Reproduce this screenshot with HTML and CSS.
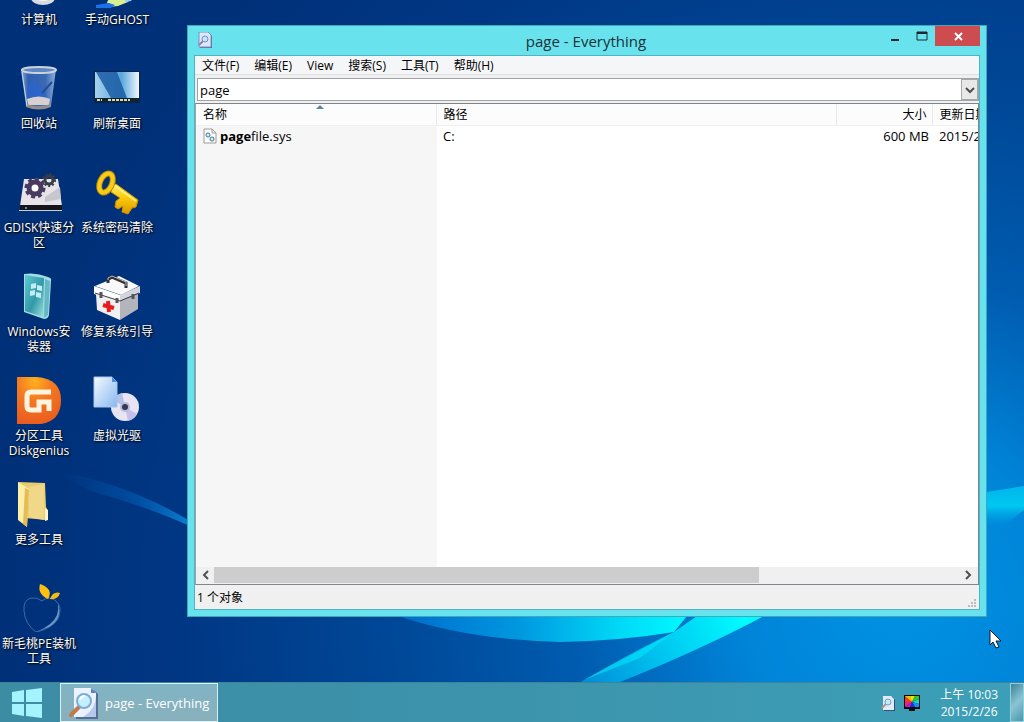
FILE: index.html
```
<!DOCTYPE html>
<html lang="zh-CN">
<head>
    <meta charset="UTF-8">
    <meta name="viewport" content="width=device-width, initial-scale=1.0">
    <title>page - Everything</title>
    <link rel="stylesheet" href="styles.css">
</head>
<body>
    <!-- Wallpaper -->
    <svg class="wallpaper" viewBox="0 0 1024 722" preserveAspectRatio="none" aria-hidden="true">
        <defs>
            <radialGradient id="sky" gradientUnits="userSpaceOnUse" cx="900" cy="600" r="900">
                <stop offset="0" stop-color="#0092e4"/>
                <stop offset=".18" stop-color="#0084d8"/>
                <stop offset=".36" stop-color="#005cb0"/>
                <stop offset=".56" stop-color="#004898"/>
                <stop offset=".8" stop-color="#003784"/>
                <stop offset="1" stop-color="#003078"/>
            </radialGradient>
            <linearGradient id="lens" x1="400" x2="700" y1="0" y2="0" gradientUnits="userSpaceOnUse">
                <stop offset="0" stop-color="#006ccc"/>
                <stop offset=".4" stop-color="#0098e0"/>
                <stop offset=".75" stop-color="#00dcf8"/>
                <stop offset="1" stop-color="#00ffff"/>
            </linearGradient>
            <linearGradient id="beam" x1="590" y1="682" x2="740" y2="610" gradientUnits="userSpaceOnUse">
                <stop offset="0" stop-color="#0090d8"/>
                <stop offset=".45" stop-color="#00c4f0"/>
                <stop offset="1" stop-color="#00fcff"/>
            </linearGradient>
            <linearGradient id="streak" x1="60" y1="0" x2="190" y2="0" gradientUnits="userSpaceOnUse">
                <stop offset="0" stop-color="#0050a8" stop-opacity="0"/>
                <stop offset=".6" stop-color="#0058b0" stop-opacity=".7"/>
                <stop offset="1" stop-color="#0c80d0"/>
            </linearGradient>
            <linearGradient id="ray" x1="0" y1="490" x2="0" y2="530" gradientUnits="userSpaceOnUse">
                <stop offset="0" stop-color="#00b8ec"/>
                <stop offset=".4" stop-color="#00c8f0"/>
                <stop offset="1" stop-color="#0088dc" stop-opacity="0"/>
            </linearGradient>
        </defs>
        <rect width="1024" height="722" fill="url(#sky)"/>
        <path d="M50 470q75 12 140 51v5q-50-22-100-35z" fill="url(#streak)"/>
        <path d="M398 616Q470 640 560 642Q620 641 674 632L700 600H398z" fill="url(#lens)"/>
        <path d="M720 600L674 632L584 680L520 722L620 682Q700 650 764 616z" fill="url(#beam)"/>
        <path d="M674 632Q640 648 584 680L640 658z" fill="#00e8fc" opacity=".6"/>
        <path d="M980 493L1024 486V510L980 545z" fill="url(#ray)"/>
    </svg>

    <main class="desktop">
        <nav class="shortcuts">
            <a href="#"><svg viewBox="0 0 48 48"><rect x="4" y="4" width="40" height="28" rx="2" fill="#9cc"/><ellipse cx="28" cy="38" rx="12" ry="7" fill="#d8dce0"/><ellipse cx="28" cy="36" rx="9" ry="5" fill="#f6f6f6"/></svg><span>计算机</span></a>
            <a href="#">
                <svg viewBox="0 0 48 48">
                    <defs>
                        <linearGradient id="glass" x1="0" x2="1"><stop offset="0" stop-color="#a8c4e8"/><stop offset=".2" stop-color="#3868b8"/><stop offset=".7" stop-color="#4474c0"/><stop offset="1" stop-color="#a8c8ec"/></linearGradient>
                    </defs>
                    <path d="M6 5l5 37q13 6 25 0l5-37z" fill="url(#glass)" opacity=".85"/>
                    <path d="M12 26l3-7 4-2 5 4 1 5 6 2-1 5-7 3-8-3z" fill="#2c64d0" opacity=".8"/>
                    <path d="M27 29l10-11" stroke="#244c98" stroke-width="2"/>
                    <path d="M12 35q12-5 23 0l-1 6H13z" fill="#d8d0d0"/>
                    <path d="M11 40q13 4 25 0v3q-12 5-25 0z" fill="#948c88"/>
                    <ellipse cx="24" cy="6" rx="17" ry="3" fill="#6088c4" stroke="#ccd2da" stroke-width="2"/>
                    <path d="M7 8l5 34" stroke="#c8dcf4" stroke-width="1" fill="none"/>
                </svg>
                <span>回收站</span>
            </a>
            <a href="#">
                <svg viewBox="0 0 48 48">
                    <path d="M9 11h34l4 27H5z" fill="#e6e4e8"/>
                    <path d="M5 37h42v6H5z" fill="#16161a"/>
                    <path d="M4 42h43v1H4z" fill="#ccc"/>
                    <path d="M30 29l15-10 1 12-16 3z" fill="#c8c8cc"/>
                    <circle cx="11" cy="40" r="1" fill="#3cf"/>
                    <circle cx="20" cy="20" r="6" fill="#fff" stroke="#4a3c60" stroke-width="5"/>
                    <circle cx="20" cy="20" r="9" fill="none" stroke="#4a3c60" stroke-width="3" stroke-dasharray="4 3"/>
                    <circle cx="34" cy="12" r="4" fill="none" stroke="#3a3c48" stroke-width="3"/>
                    <circle cx="34" cy="12" r="6" fill="none" stroke="#3a3c48" stroke-width="2" stroke-dasharray="2 2"/>
                </svg>
                <span>GDISK快速分<br>区</span>
            </a>
            <a href="#">
                <svg viewBox="0 0 48 48">
                    <defs><linearGradient id="teal" x1="0" y1="0" x2="1" y2="1"><stop offset="0" stop-color="#5cccd4"/><stop offset=".55" stop-color="#3498a8"/><stop offset="1" stop-color="#9ce4e0"/></linearGradient></defs>
                    <path d="M9 2q12-2 24 3 4 1 3 4l-2 34q-1 4-5 4L9 40z" fill="#a4dce4"/>
                    <path d="M10 3l19 3-1 39-18-6z" fill="url(#teal)"/>
                    <path d="M30 7l5 2-2 34-4 3z" fill="#64b8c4"/>
                    <path d="M16 12l5-1v5l-5 1zM22 13l5 1v5l-5-1zM15 19l5-1v5l-5 1zM21 20l5 1v5l-5-1z" fill="#c4ecf4"/>
                </svg>
                <span>Windows安<br>装器</span>
            </a>
            <a href="#">
                <svg viewBox="0 0 48 48">
                    <defs><radialGradient id="orange" cx=".4" cy=".1" r="1"><stop offset="0" stop-color="#ffb020"/><stop offset=".4" stop-color="#f47820"/><stop offset="1" stop-color="#e85820"/></radialGradient></defs>
                    <path d="M2 1h20q24 2 24 23T26 48H2z" fill="url(#orange)"/>
                    <path d="M36 16H16q-4 0-4 4v10q0 4 4 4h8v-8h10v9" fill="none" stroke="#fff4e0" stroke-width="5"/>
                </svg>
                <span>分区工具<br>Diskgenius</span>
            </a>
            <a href="#">
                <svg viewBox="0 0 48 48">
                    <path d="M3 2l27 1 1 24 2 4-2 9-21-2z" fill="#e8cc70"/>
                    <path d="M14 7l15-3v36l-15-3z" fill="#f0d888"/>
                    <path d="M3 2l11 7-2 38-9-7z" fill="#fcf0a8"/>
                    <path d="M10 8l4 2-2 37-4-3z" fill="#e4bc58"/>
                    <path d="M30 28l3 2v10l-3 1z" fill="#fff8d0"/>
                </svg>
                <span>更多工具</span>
            </a>
            <a href="#">
                <svg viewBox="0 0 48 48">
                    <path d="M27 17Q22 13 16 14Q8 16 9 27Q10 40 21 48Q36 45 43 35Q48 23 41 17Q34 11 27 17" fill="none" stroke="#3c6cac" stroke-width="1"/>
                    <path d="M43 19Q48 35 34 43L21 48Q38 41 42 31Q44 25 43 19" fill="#6c94c8"/>
                    <path d="M25 0q-3 10 8 15Q39 5 25 0z" fill="#fcc010"/>
                    <path d="M35 15q3-8 10-6-2 7-10 6z" fill="#f8b818"/>
                </svg>
                <span>新毛桃PE装机<br>工具</span>
            </a>
            <a href="#"><svg viewBox="0 0 48 48"><path d="M14 42l8-12h22l-9 12-10 4-9 1z" fill="#d8f090"/><path d="M34 30h12l-8 11-6 1z" fill="#9cc8fc"/><path d="M3 45l13-2 6 2-4 3H3z" fill="#1c70e8"/></svg><span>手动GHOST</span></a>
            <a href="#">
                <svg viewBox="0 0 48 48">
                    <defs><linearGradient id="shot" x1="0" x2="1"><stop offset="0" stop-color="#a8d0ec"/><stop offset=".6" stop-color="#58a8dc"/><stop offset="1" stop-color="#f4f8fc"/></linearGradient></defs>
                    <path d="M1 7h46v32H1z" fill="#082450"/>
                    <path d="M2 8h44v30H2z" fill="url(#shot)"/>
                    <path d="M3 8h21l10 26H18z" fill="#1c5ca4" opacity=".85"/>
                    <path d="M2 34h44v4H2z" fill="#14242c"/>
                    <path d="M4 36h5M15 36h22" stroke="#d0dcc0" stroke-width="2" stroke-dasharray="3 1"/>
                </svg>
                <span>刷新桌面</span>
            </a>
            <a href="#">
                <svg viewBox="0 0 48 48">
                    <defs><linearGradient id="gold" x1="0" y1="0" x2="0" y2="1"><stop offset="0" stop-color="#fff068"/><stop offset=".5" stop-color="#f8c808"/><stop offset="1" stop-color="#dc9800"/></linearGradient></defs>
                    <path d="M19 17l4-1 22 16-2 7-4 1-4 6-6-2 1-6-5 3-3-2 1-6 4-3-9-6z" fill="url(#gold)" stroke="#c89000"/>
                    <ellipse cx="13" cy="15" rx="6" ry="10" transform="rotate(24 13 15)" fill="none" stroke="#c08c00" stroke-width="6"/>
                    <ellipse cx="13" cy="15" rx="6" ry="10" transform="rotate(24 13 15)" fill="none" stroke="#f8cc18" stroke-width="4"/>
                    <path d="M22 18l21 15" stroke="#fff080" stroke-width="2"/>
                </svg>
                <span>系统密码清除</span>
            </a>
            <a href="#">
                <svg viewBox="0 0 48 48">
                    <path d="M2 14L26 4l20 10-18 9z" fill="#f8f8f8"/>
                    <path d="M1 14l26 9v6L1 22z" fill="#fff"/>
                    <path d="M27 23l20-9v7l-20 8z" fill="#d4d4dc"/>
                    <path d="M3 22l24 7v19L4 38z" fill="#f0f0f2"/>
                    <path d="M27 29l18-7v15L27 48z" fill="#b4b4bc"/>
                    <path d="M2 21l25 8 19-8" fill="none" stroke="#404048" stroke-width="1"/>
                    <path d="M15 11V7l4-2 14 6v5" fill="none" stroke="#303034" stroke-width="3"/>
                    <path d="M15 8V6l4-2 14 6v4" fill="none" stroke="#bcbcc0" stroke-width="1"/>
                    <path d="M8 20v6M24 26v5M40 22v5" stroke="#555" stroke-width="3"/>
                    <path d="M15 29l1 11M10 33l11 3" stroke="#e81c1c" stroke-width="4"/>
                </svg>
                <span>修复系统引导</span>
            </a>
            <a href="#">
                <svg viewBox="0 0 48 48">
                    <defs><linearGradient id="paper" x1="0" y1="0" x2="1" y2="1"><stop offset="0" stop-color="#f4faff"/><stop offset="1" stop-color="#88b8f0"/></linearGradient></defs>
                    <circle cx="32" cy="31" r="14" fill="#e8e4f4"/>
                    <path d="M32 31L20 24a14 14 0 0 1 9-7z" fill="#b4c0e4"/>
                    <path d="M32 31l12 7a14 14 0 0 1-9 7z" fill="#c4c0e8"/>
                    <circle cx="32" cy="31" r="5" fill="#bcb8dc"/>
                    <circle cx="32" cy="31" r="3" fill="#303858"/>
                    <path d="M1 1h18l5 5v25H1z" fill="url(#paper)" stroke="#a4c4e8"/>
                    <path d="M19 1v5h5z" fill="#4890dc"/>
                </svg>
                <span>虚拟光驱</span>
            </a>
        </nav>

        <section class="window">
            <header class="title-bar">
                <svg class="title-icon" viewBox="0 0 16 16">
                    <path d="M3 1h9l3 3v12H3z" fill="#5868a8"/>
                    <path d="M2 0h9l3 3v12H2z" fill="#dce8fc"/>
                    <path d="M2 15V0h9l3 3v12z" fill="none" stroke="#7c90c0"/>
                    <circle cx="8" cy="7" r="3" fill="#c8e4fc" stroke="#7090c8"/>
                    <path d="M2 13l4-4" stroke="#a08090" stroke-width="2"/>
                </svg>
                <h1>page - Everything</h1>
                <div class="window-buttons">
                    <button type="button" aria-label="最小化"><svg viewBox="0 0 16 16"><path d="M4 11h8v2H4z" fill="#1c2830"/></svg></button>
                    <button type="button" aria-label="最大化"><svg viewBox="0 0 16 16"><path d="M3 4h10v8H3z" fill="none" stroke="#1c2830"/><path d="M3 4h10v2H3z" fill="#1c2830"/></svg></button>
                    <button type="button" class="close" aria-label="关闭"><svg viewBox="0 0 16 16"><path d="M5 5l7 7M12 5l-7 7" stroke="#fff" stroke-width="2"/></svg></button>
                </div>
            </header>

            <div class="window-body">
                <nav class="menu">
                    <button type="button">文件(F)</button>
                    <button type="button">编辑(E)</button>
                    <button type="button">View</button>
                    <button type="button">搜索(S)</button>
                    <button type="button">工具(T)</button>
                    <button type="button">帮助(H)</button>
                </nav>

                <div class="search">
                    <input type="text" value="page" aria-label="搜索">
                    <button type="button" aria-label="搜索历史"><svg viewBox="0 0 15 20"><path d="M4 8l4 4 4-4" fill="none" stroke="#505050" stroke-width="2"/></svg></button>
                </div>

                <div class="results">
                    <table>
                        <thead>
                            <tr>
                                <th class="col-name">名称<svg class="sort" viewBox="0 0 8 4"><path d="M0 4l4-4 4 4z" fill="#4c88a4"/></svg></th>
                                <th class="col-path">路径</th>
                                <th class="col-size">大小</th>
                                <th class="col-date">更新日期</th>
                            </tr>
                        </thead>
                        <tbody>
                            <tr>
                                <td>
                                    <div class="file">
                                        <svg viewBox="0 0 14 16"><path d="M1 1h8l4 4v10H1z" fill="#fcfcfc" stroke="#9c9c9c"/><path d="M9 1v4h4" fill="none" stroke="#9c9c9c"/><circle cx="5" cy="7" r="2" fill="#d8f0f8" stroke="#3c7488"/><circle cx="9" cy="11" r="2" fill="#d8f0f8" stroke="#3c7488"/></svg>
                                        <span><b>page</b>file.sys</span>
                                    </div>
                                </td>
                                <td>C:</td>
                                <td class="size">600 MB</td>
                                <td>2015/2/26</td>
                            </tr>
                        </tbody>
                    </table>
                    <div class="scrollbar">
                        <button type="button" aria-label="向左"><svg viewBox="0 0 18 17"><path d="M12 4L8 8l4 4" fill="none" stroke="#505050" stroke-width="2"/></svg></button>
                        <div class="track"><div class="thumb"></div></div>
                        <button type="button" aria-label="向右"><svg viewBox="0 0 18 17"><path d="M6 4l4 4-4 4" fill="none" stroke="#505050" stroke-width="2"/></svg></button>
                    </div>
                </div>

                <footer class="status">
                    <span>1 个对象</span>
                    <svg viewBox="0 0 10 10"><path d="M7 0h2v2H7zM4 3h2v2H4zM7 3h2v2H7zM1 6h2v2H1zM4 6h2v2H4zM7 6h2v2H7z" fill="#bcbcbc"/></svg>
                </footer>
            </div>
        </section>
    </main>

    <footer class="taskbar">
        <button type="button" class="start" aria-label="开始">
            <svg viewBox="0 0 30 30"><path d="M0 4l12-2v12H0zM14 2l16-2v14H14zM0 16h12v12L0 26zM14 16h16v14l-16-2z" fill="#a4f4ff"/></svg>
        </button>
        <button type="button" class="task">
            <svg viewBox="0 0 30 32">
                <path d="M7 3h18l4 4v25H7z" fill="#3c5484" opacity=".7"/>
                <path d="M5 1h17l5 5v24H5z" fill="#ecf2ff"/>
                <path d="M14 30h13V8q0 14-13 22z" fill="#b4c8f0"/>
                <path d="M22 1v5h5z" fill="#5c80c4"/>
                <path d="M2 28l8-8" stroke="#c07c48" stroke-width="4" stroke-linecap="round"/>
                <circle cx="15" cy="14" r="7" fill="#c4f0fc" stroke="#7cacd8" stroke-width="2"/>
                <path d="M11 13q1-4 5-4" fill="none" stroke="#fff" stroke-width="2"/>
            </svg>
            <span>page - Everything</span>
        </button>
        <div class="tray">
            <svg viewBox="0 0 16 16">
                <path d="M4 2h8l3 3v11H4z" fill="#345080"/>
                <path d="M3 1h8l3 3v11H3z" fill="#e0ecfc"/>
                <circle cx="8" cy="7" r="3" fill="#c4e8fc" stroke="#7c9ccc"/>
                <path d="M2 13l4-4" stroke="#b89088" stroke-width="2"/>
            </svg>
            <svg viewBox="0 0 16 16">
                <path d="M0 0h16v14h-5v2H5v-2H0z" fill="#0c0c0c"/>
                <path d="M1 1h7v6H1z" fill="#e43020"/>
                <path d="M1 1h5l2 6z" fill="#f0c010"/>
                <path d="M8 7L6 1h5z" fill="#e8e800"/>
                <path d="M8 7l3-6h4v3z" fill="#30c830"/>
                <path d="M8 7l7-3v5z" fill="#10d8e0"/>
                <path d="M8 7l7 2v3h-4z" fill="#1890f0"/>
                <path d="M8 7l3 5H6z" fill="#1830e8"/>
                <path d="M8 7l-2 5H1z" fill="#b020e0"/>
                <path d="M8 7l-7 5V6z" fill="#f02080"/>
                <path d="M8 7L1 6V2z" fill="#f04018"/>
            </svg>
            <time datetime="2015-02-26T10:03">上午 10:03<br>2015/2/26</time>
        </div>
        <button type="button" class="show-desktop" aria-label="显示桌面"></button>
    </footer>

    <!-- Mouse pointer -->
    <svg class="pointer" viewBox="0 0 13 20"><path d="M1 1v15l3-3 3 6 3-1-3-6h5z" fill="#fff" stroke="#101828"/></svg>
</body>
</html>
```

FILE: styles.css
```
* {
    box-sizing: border-box;
}

body {
    margin: 0;
    min-height: 100vh;
    display: flex;
    flex-direction: column;
    position: relative;
    overflow: hidden;
    background: #003784;
    color: #000;
    font-family: "Open Sans", "Noto Sans CJK SC", sans-serif;
    font-size: 12px;
}

button {
    margin: 0;
    padding: 0;
    border: 0;
    background: none;
    color: inherit;
    font: inherit;
}

svg {
    display: block;
}

.wallpaper {
    position: absolute;
    inset: 0;
    width: 100%;
    height: 100%;
    z-index: -1;
}

.desktop {
    flex: 1;
    position: relative;
    overflow: hidden;
}

/* Desktop shortcuts */
.shortcuts {
    display: grid;
    grid-template-rows: repeat(6, 104px) auto;
    grid-auto-columns: 78px;
    grid-auto-flow: column;
    justify-content: start;
    margin-top: -40px;
}

.shortcuts a {
    display: flex;
    flex-direction: column;
    align-items: center;
    gap: 4px;
    color: #fff;
    line-height: 15px;
    text-align: center;
    text-decoration: none;
    text-shadow: 1px 1px 2px #000, 0 0 2px #001840;
    white-space: nowrap;
}

.shortcuts svg {
    width: 48px;
    height: 48px;
}

/* Window */
.window {
    position: absolute;
    inset: 25px 37px 65px 187px;
    display: flex;
    flex-direction: column;
    padding: 0 6px 6px;
    background: #68e3ed;
    border: 1px solid #40a8b8;
}

.title-bar {
    display: flex;
    align-items: flex-start;
    height: 29px;
}

.title-icon {
    width: 16px;
    height: 16px;
    margin: 6px 0 0 3px;
}

.title-bar h1 {
    flex: 1;
    margin: 0;
    padding-left: 78px;
    font-size: 15px;
    font-weight: 400;
    line-height: 30px;
    text-align: center;
    color: #1c3038;
}

.window-buttons {
    display: flex;
}

.window-buttons button {
    display: flex;
    align-items: center;
    justify-content: center;
    width: 27px;
    height: 20px;
}

.window-buttons svg {
    width: 16px;
    height: 16px;
}

.window-buttons .close {
    width: 45px;
    background: #cc4c50;
}

.window-body {
    flex: 1;
    display: flex;
    flex-direction: column;
    background: #f0f0f0;
    border: 1px solid #50b4c0;
}

.menu {
    display: flex;
    gap: 15px;
    height: 19px;
    padding: 0 7px;
    background: #f5f6f7;
    border-bottom: 1px solid #e0e0e2;
    line-height: 20px;
}

.search {
    display: flex;
    height: 23px;
    margin: 3px 0 2px 2px;
    background: #fff;
    border: 1px solid #a0a4a8;
}

.search input {
    flex: 1;
    min-width: 0;
    padding: 0 2px;
    border: 0;
    outline: 0;
    background: none;
    font: inherit;
    font-size: 13px;
}

.search button {
    width: 17px;
    background: #e8e8e8;
    border: 1px solid #a8a8a8;
}

.search svg {
    width: 15px;
    height: 20px;
}

/* Result list */
.results {
    flex: 1;
    display: flex;
    flex-direction: column;
    justify-content: space-between;
    overflow: hidden;
    background: linear-gradient(to right, #f6f6f6 241px, #fff 241px);
    border: 1px solid #80848c;
    border-left-color: #a0a4a8;
}

.results table {
    width: 1080px;
    table-layout: fixed;
    border-collapse: collapse;
}

.results th {
    position: relative;
    height: 21px;
    padding: 1px 7px 0;
    background: #fcfcfd;
    border-right: 1px solid #e4e8f0;
    border-bottom: 1px solid #f0f0f2;
    font-weight: 400;
    line-height: 19px;
    text-align: left;
}

.results td {
    height: 20px;
    padding: 0 7px;
    font-size: 13px;
    line-height: 20px;
}

.col-name {
    width: 240px;
}

.col-path {
    width: 400px;
}

.results .col-size {
    width: 96px;
    padding-right: 5px;
    text-align: right;
}

.results .size {
    padding-right: 3px;
    text-align: right;
}

.sort {
    position: absolute;
    top: 1px;
    left: 50%;
    width: 8px;
    height: 4px;
}

.file {
    display: flex;
    align-items: center;
    gap: 3px;
}

.file svg {
    width: 14px;
    height: 16px;
}

.scrollbar {
    display: flex;
    height: 17px;
    padding-bottom: 1px;
    background: #f0f0f0;
}

.scrollbar svg {
    width: 18px;
    height: 17px;
}

.track {
    flex: 1;
}

.thumb {
    width: 73%;
    height: 100%;
    background: #cdcdcd;
}

.status {
    display: flex;
    align-items: flex-end;
    justify-content: space-between;
    height: 24px;
    padding: 0 2px;
    line-height: 22px;
}

.status svg {
    width: 10px;
    height: 10px;
}

/* Taskbar */
.taskbar {
    display: flex;
    align-items: stretch;
    height: 40px;
    background: linear-gradient(to right, #3c8ca4, #3c94ac 50%, #3ca0b8);
    border-top: 1px solid #3c849c;
    color: #fff;
}

.start {
    width: 60px;
    padding-left: 12px;
}

.start svg {
    width: 30px;
    height: 30px;
}

.task {
    display: flex;
    align-items: center;
    gap: 6px;
    width: 158px;
    padding: 0 8px;
    background: linear-gradient(#80b4c4, #88b0bc);
    border: 1px solid #d8f4f8;
    font-size: 13px;
    white-space: nowrap;
}

.task svg {
    flex: none;
    width: 30px;
    height: 32px;
}

.tray {
    display: flex;
    align-items: center;
    gap: 8px;
    margin-left: auto;
}

.tray svg {
    width: 16px;
    height: 16px;
}

.tray time {
    margin: 0 12px;
    line-height: 17px;
    text-align: center;
}

.show-desktop {
    width: 14px;
    background: linear-gradient(135deg, #3c8498, #8cc4d4 50%, #4898ac);
    border: 1px solid #90d0dc;
}

.pointer {
    position: absolute;
    right: 22px;
    bottom: 73px;
    width: 13px;
    height: 20px;
}
```
